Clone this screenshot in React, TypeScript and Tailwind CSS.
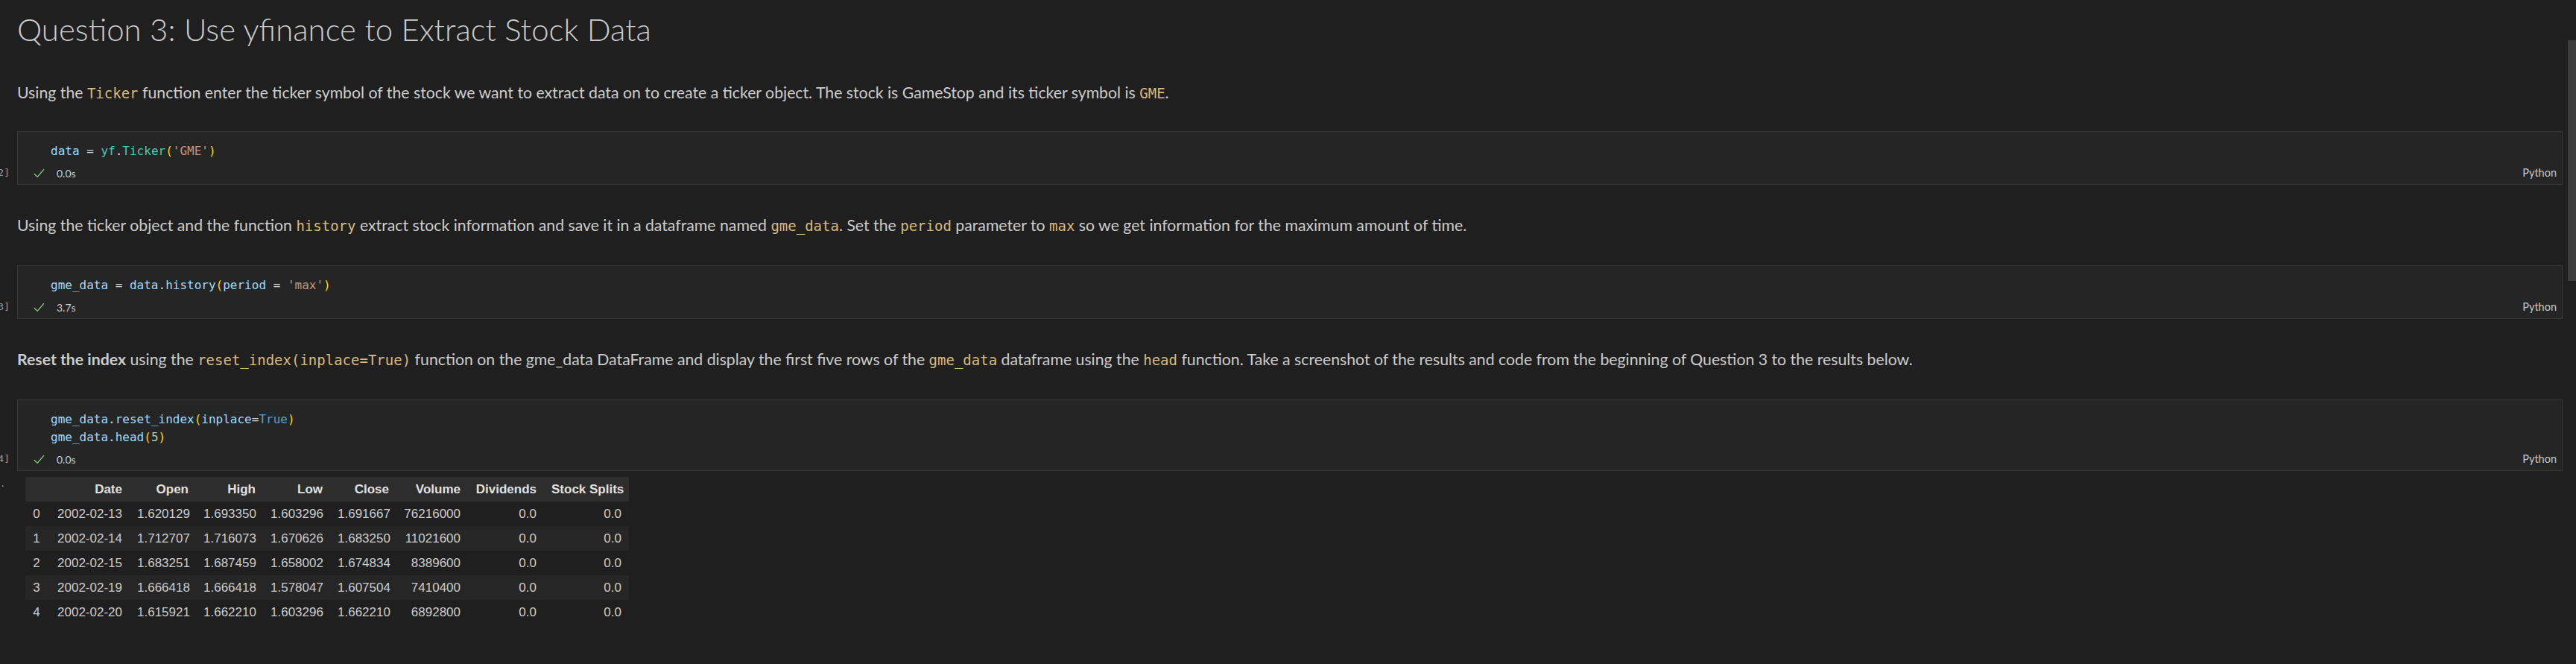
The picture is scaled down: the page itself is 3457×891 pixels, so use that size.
import type { ReactNode } from "react";

type Tok = [string, string];

const Code = ({ children }: { children: ReactNode }) => (
  <code className="font-['DejaVu_Sans_Mono',monospace] text-[19px] text-[#d7ba7d]">
    {children}
  </code>
);

const Check = () => (
  <svg width="15" height="13" viewBox="0 0 15 13" fill="none">
    <path d="M1 7.2 L5.2 11.4 L14 1.2" stroke="#89d185" strokeWidth="1.3" />
  </svg>
);

function CodeCell({ count, time, lines }: { count: number; time: string; lines: Tok[][] }) {
  return (
    <div className="flex">
      <div className="w-[23px] shrink-0 overflow-hidden flex flex-col justify-end pr-[10px] pb-[5px]">
        <div className="h-[22px] flex items-center justify-end whitespace-nowrap font-['DejaVu_Sans_Mono',monospace] text-[13px] text-[#9a9a9a]">
          [{count}]
        </div>
      </div>
      <div className="flex-1 mr-[18px] border border-[#383838] bg-[#252525] pt-[14px] pb-[4px]">
        <div className="pl-[44px] font-['DejaVu_Sans_Mono',monospace] text-[16px] leading-[24px] whitespace-pre">
          {lines.map((line, i) => (
            <div key={i}>
              {line.map(([t, c], j) => (
                <span key={j} style={{ color: c }}>
                  {t}
                </span>
              ))}
            </div>
          ))}
        </div>
        <div className="mt-[6px] h-[22px] flex items-center pl-[21px] pr-[7px] font-['Lato',sans-serif]">
          <Check />
          <span className="ml-[16px] text-[14px] text-[#cccccc]">{time}</span>
          <span className="ml-auto text-[14.5px] text-[#c8c8c8]">Python</span>
        </div>
      </div>
    </div>
  );
}

const V = "#9cdcfe";
const W = "#d4d4d4";
const T = "#4ec9b0";
const B = "#ffd700";
const S = "#ce9178";

const rows = [
  ["0", "2002-02-13", "1.620129", "1.693350", "1.603296", "1.691667", "76216000", "0.0", "0.0"],
  ["1", "2002-02-14", "1.712707", "1.716073", "1.670626", "1.683250", "11021600", "0.0", "0.0"],
  ["2", "2002-02-15", "1.683251", "1.687459", "1.658002", "1.674834", "8389600", "0.0", "0.0"],
  ["3", "2002-02-19", "1.666418", "1.666418", "1.578047", "1.607504", "7410400", "0.0", "0.0"],
  ["4", "2002-02-20", "1.615921", "1.662210", "1.603296", "1.662210", "6892800", "0.0", "0.0"],
];

const heads = ["", "Date", "Open", "High", "Low", "Close", "Volume", "Dividends", "Stock Splits"];
const widths = ["w-[30px]", "w-[110px]", "w-[89px]", "w-[90px]", "w-[90px]", "w-[89px]", "w-[96px]", "w-[102px]", "w-[114px]"];

export default function App() {
  return (
    <div className="relative w-full h-[891px] overflow-hidden bg-[#1f1f1f] text-[#cccccc] font-['Lato',sans-serif]">
      <div className="absolute right-0 top-[54px] w-[11px] h-[323px] bg-[#3c3c3c]" />

      <h1 className="pl-[23px] pt-[14px] text-[42px] leading-[50px] font-light">
        Question 3: Use yfinance to Extract Stock Data
      </h1>

      <p className="pl-[23px] mt-[45px] mb-[36px] text-[21.25px] leading-[30px]">
        Using the <Code>Ticker</Code> function enter the ticker symbol of the stock we want to extract data on to
        create a ticker object. The stock is GameStop and its ticker symbol is <Code>GME</Code>.
      </p>

      <CodeCell
        count={22}
        time="0.0s"
        lines={[[["data", V], [" = ", W], ["yf", T], [".", W], ["Ticker", T], ["(", B], ["'GME'", S], [")", B]]]}
      />

      <p className="pl-[23px] mt-[39px] mb-[38px] text-[21.25px] leading-[30px]">
        Using the ticker object and the function <Code>history</Code> extract stock information and save it in a
        dataframe named <Code>gme_data</Code>. Set the <Code>period</Code> parameter to <Code>max</Code> so we get
        information for the maximum amount of time.
      </p>

      <CodeCell
        count={23}
        time="3.7s"
        lines={[
          [["gme_data", V], [" = ", W], ["data", V], [".", W], ["history", V], ["(", B], ["period", V], [" = ", W], ["'max'", S], [")", B]],
        ]}
      />

      <p className="pl-[23px] mt-[39px] mb-[38px] text-[21.25px] leading-[30px]">
        <b className="font-bold">Reset the index</b> using the <Code>reset_index(inplace=True)</Code> function on the
        gme_data DataFrame and display the first five rows of the <Code>gme_data</Code> dataframe using the{" "}
        <Code>head</Code> function. Take a screenshot of the results and code from the beginning of Question 3 to the
        results below.
      </p>

      <CodeCell
        count={24}
        time="0.0s"
        lines={[
          [["gme_data", V], [".", W], ["reset_index", V], ["(", B], ["inplace", V], ["=", W], ["True", "#569cd6"], [")", B]],
          [["gme_data", V], [".", W], ["head", V], ["(", B], ["5", "#b5cea8"], [")", B]],
        ]}
      />

      <div className="flex mt-[8px]">
        <div className="w-[34px] shrink-0 pl-[2px] pt-[1px] text-[14px] leading-[14px] text-[#9a9a9a]">.</div>
        <table className="w-[810px] table-fixed border-collapse font-['Liberation_Sans',Arial,sans-serif] text-[17px]">
          <thead>
            <tr className="bg-[#2d2d2d] h-[33px]">
              {heads.map((h, i) => (
                <th key={i} className={`${widths[i]} px-[10px] text-right font-bold text-[#e0e0e0] whitespace-nowrap`}>
                  {h}
                </th>
              ))}
            </tr>
          </thead>
          <tbody>
            {rows.map((r, ri) => (
              <tr key={ri} className={`h-[33px] ${ri % 2 === 1 ? "bg-[#262626]" : ""}`}>
                {r.map((v, ci) => (
                  <td
                    key={ci}
                    className={`px-[10px] whitespace-nowrap ${ci === 0 ? "text-center" : "text-right"}`}
                  >
                    {v}
                  </td>
                ))}
              </tr>
            ))}
          </tbody>
        </table>
      </div>
    </div>
  );
}
